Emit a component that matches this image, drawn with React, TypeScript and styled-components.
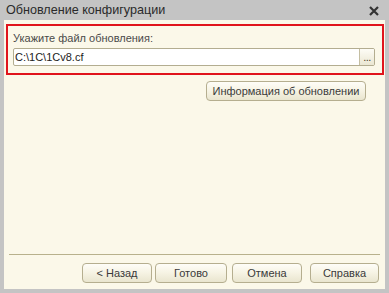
import React from "react";
import styled, { createGlobalStyle } from "styled-components";

const Global = createGlobalStyle`
  html, body { margin: 0; padding: 0; background: #c4c4c4; }
  body { font-family: "Liberation Sans", Arial, sans-serif; }
`;

const Frame = styled.div`
  width: 389px;
  height: 293px;
  box-sizing: border-box;
  background: #c4c4c4;
  display: flex;
  flex-direction: column;
  padding: 0 4px 4px 4px;
`;

const TitleBar = styled.div`
  height: 20px;
  display: flex;
  align-items: center;
  justify-content: space-between;
  padding: 0 4px 0 2px;
  color: #2a2a2a;
`;

const TitleText = styled.span`
  font-size: 12.6px;
`;

const CloseIcon = styled.svg`
  width: 10px;
  height: 10px;
  margin-right: 2px;
  margin-top: 1px;
`;

const Body = styled.div`
  flex: 1;
  background: #fbf8e9;
  display: flex;
  flex-direction: column;
`;

const Highlight = styled.div`
  margin: 4px 1px 0 2px;
  border: 2px solid #e0141c;
  padding: 5px 7px 7px 5px;
  display: flex;
  flex-direction: column;
  gap: 3px;
`;

const Label = styled.div`
  font-size: 11px;
  line-height: 14px;
  color: #4a4a4a;
`;

const InputWrap = styled.div`
  display: flex;
  height: 16px;
  border: 1px solid #b3ad90;
  border-radius: 2px;
  background: #fff;
  overflow: hidden;
`;

const Field = styled.div`
  flex: 1;
  font-size: 11px;
  line-height: 16px;
  color: #222;
  padding-left: 1px;
`;

const Ellipsis = styled.div`
  width: 14px;
  border-left: 1px solid #c4bea2;
  background: linear-gradient(#fdfcf6, #ebe7d2);
  font-size: 11px;
  line-height: 17px;
  text-align: center;
  color: #4a4428;
  letter-spacing: -0.5px;
`;

const InfoRow = styled.div`
  display: flex;
  justify-content: flex-end;
  padding: 6px 19px 0 0;
`;

const Button = styled.div<{ $w: number }>`
  width: ${(p) => p.$w}px;
  height: 20px;
  box-sizing: border-box;
  border: 1px solid #b5ae8f;
  border-radius: 4px;
  background: linear-gradient(#fefdf8 0%, #f6f3e3 50%, #e9e5cf 100%);
  font-size: 11px;
  line-height: 18px;
  text-align: center;
  color: #3a3a3a;
  white-space: nowrap;
`;

const Spacer = styled.div`
  flex: 1;
`;

const Separator = styled.div`
  height: 1px;
  background: #b8b18c;
  margin: 0 5px 0 5px;
`;

const Buttons = styled.div`
  display: flex;
  justify-content: flex-end;
  padding: 8px 6px 6px 0;
`;

const Gap = styled.div<{ $w: number }>`
  width: ${(p) => p.$w}px;
`;

export default function App() {
  return (
    <>
      <Global />
      <Frame>
        <TitleBar>
          <TitleText>Обновление конфигурации</TitleText>
          <CloseIcon viewBox="0 0 10 10">
            <path d="M1 1 L9 9 M9 1 L1 9" stroke="#333" strokeWidth="2.2" />
          </CloseIcon>
        </TitleBar>
        <Body>
          <Highlight>
            <Label>Укажите файл обновления:</Label>
            <InputWrap>
              <Field>C:\1C\1Cv8.cf</Field>
              <Ellipsis>...</Ellipsis>
            </InputWrap>
          </Highlight>
          <InfoRow>
            <Button $w={160}>Информация об обновлении</Button>
          </InfoRow>
          <Spacer />
          <Separator />
          <Buttons>
            <Button $w={70}>&lt; Назад</Button>
            <Gap $w={3} />
            <Button $w={72}>Готово</Button>
            <Gap $w={5} />
            <Button $w={70}>Отмена</Button>
            <Gap $w={8} />
            <Button $w={69}>Справка</Button>
          </Buttons>
        </Body>
      </Frame>
    </>
  );
}
